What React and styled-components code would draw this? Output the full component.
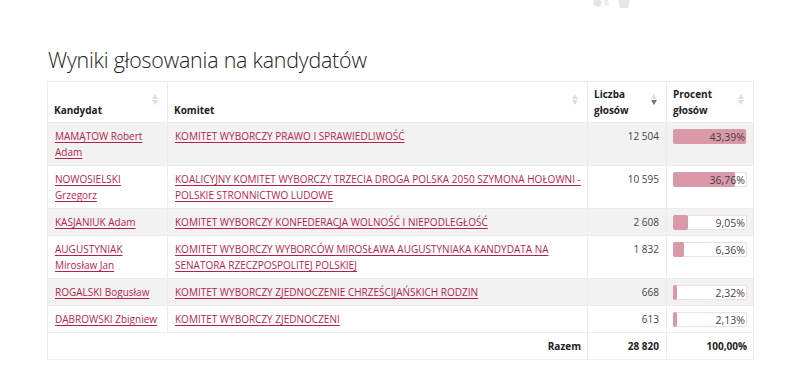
import React from 'react'
import styled, { createGlobalStyle } from 'styled-components'

const Global = createGlobalStyle`
  html, body {
    margin: 0;
    padding: 0;
    background: #fff;
  }
  body {
    font-family: "Open Sans", "Liberation Sans", sans-serif;
    color: #333;
  }
`

const Page = styled.div`
  width: 800px;
  height: 377px;
  overflow: hidden;
  position: relative;
`

const TopIcons = styled.div`
  position: absolute;
  left: 590px;
  top: -6px;
`

const Section = styled.div`
  padding: 45px 47px 0 47px;
`

const Title = styled.h2`
  margin: 0 0 6px 1px;
  font-size: 21.4px;
  font-weight: 300;
  color: #222;
  line-height: 30px;
  letter-spacing: -0.2px;
`

const Table = styled.table`
  width: 706px;
  table-layout: fixed;
  border-collapse: collapse;
  font-size: 10px;
  line-height: 16px;
  border: 1px solid #ececec;
`

const Th = styled.th`
  position: relative;
  text-align: left;
  vertical-align: bottom;
  font-weight: 700;
  color: #222;
  padding: 4px 20px 4px 6px;
  border-left: 1px solid #ececec;
`

const Sort = styled.span`
  position: absolute;
  right: 9px;
  top: 50%;
  margin-top: -8px;
  display: flex;
  flex-direction: column;
  gap: 1px;
`

const Arrow = styled.span`
  width: 0;
  height: 0;
  border-left: 3px solid transparent;
  border-right: 3px solid transparent;
  ${p => p.$up
    ? `border-bottom: 5px solid ${p.$on ? '#777' : '#dedede'};`
    : `border-top: 5px solid ${p.$on ? '#777' : '#dedede'};`}
`

const Row = styled.tr`
  background: ${p => (p.$odd ? '#f2f2f2' : '#fff')};
  border-top: 1px solid #ececec;
`

const Td = styled.td`
  vertical-align: top;
  padding: 5px 6px 5px 7px;
  border-left: 1px solid #ececec;
  text-align: ${p => (p.$right ? 'right' : 'left')};
  font-weight: ${p => (p.$bold ? 700 : 400)};
  color: ${p => (p.$bold ? '#222' : '#444')};
`

const NumTd = styled(Td)`
  padding-right: 7px;
`

const BarTd = styled(Td)`
  padding: 6px 6px 5px 6px;
`

const Link = styled.a`
  color: #b51f4b;
  text-decoration: underline;
  text-underline-offset: 2px;
  text-decoration-thickness: 1px;
`

const Track = styled.div`
  position: relative;
  height: 13px;
  border: 1px solid #f3dde3;
  border-radius: 2px;
  background: #fff;
  text-align: right;
  line-height: 14px;
  padding-right: 1px;
  font-size: 10.5px;
  color: #444;
`

const Fill = styled.div`
  position: absolute;
  left: -1px;
  top: -1px;
  bottom: -1px;
  background: #d999a9;
  border-radius: 2px;
`

const Label = styled.span`
  position: relative;
`

const data = [
  ['MAMĄTOW Robert Adam', 'KOMITET WYBORCZY PRAWO I SPRAWIEDLIWOŚĆ', '12 504', 43.39],
  ['NOWOSIELSKI Grzegorz', 'KOALICYJNY KOMITET WYBORCZY TRZECIA DROGA POLSKA 2050 SZYMONA HOŁOWNI - POLSKIE STRONNICTWO LUDOWE', '10 595', 36.76],
  ['KASJANIUK Adam', 'KOMITET WYBORCZY KONFEDERACJA WOLNOŚĆ I NIEPODLEGŁOŚĆ', '2 608', 9.05],
  ['AUGUSTYNIAK Mirosław Jan', 'KOMITET WYBORCZY WYBORCÓW MIROSŁAWA AUGUSTYNIAKA KANDYDATA NA SENATORA RZECZPOSPOLITEJ POLSKIEJ', '1 832', 6.36],
  ['ROGALSKI Bogusław', 'KOMITET WYBORCZY ZJEDNOCZENIE CHRZEŚCIJAŃSKICH RODZIN', '668', 2.32],
  ['DĄBROWSKI Zbigniew', 'KOMITET WYBORCZY ZJEDNOCZENI', '613', 2.13],
]

const SortIcon = ({ down }) => (
  <Sort>
    <Arrow $up />
    <Arrow $on={down} />
  </Sort>
)

const pct = v => v.toFixed(2).replace('.', ',') + '%'

export default function App() {
  return (
    <Page>
      <Global />
      <TopIcons>
        <svg width="48" height="14" viewBox="0 0 48 14">
          <path d="M4 2 L12 4 L10 10 L3 8 Z" fill="#e4e4e4" />
          <path d="M14 3 L18 2 L19 8 L15 9 Z" fill="#ececec" />
          <path d="M28 2 L40 2 L38 11 L30 11 Z" fill="#e6e6e6" />
        </svg>
      </TopIcons>
      <Section>
        <Title>Wyniki głosowania na kandydatów</Title>
        <Table>
          <colgroup>
            <col style={{ width: 120 }} />
            <col style={{ width: 420 }} />
            <col style={{ width: 79 }} />
            <col style={{ width: 87 }} />
          </colgroup>
          <thead>
            <tr>
              <Th>Kandydat<SortIcon /></Th>
              <Th>Komitet<SortIcon /></Th>
              <Th>Liczba<br />głosów<SortIcon down /></Th>
              <Th>Procent<br />głosów<SortIcon /></Th>
            </tr>
          </thead>
          <tbody>
            {data.map(([name, com, votes, p], i) => (
              <Row key={name} $odd={i % 2 === 0}>
                <Td><Link href="#">{name}</Link></Td>
                <Td><Link href="#">{com}</Link></Td>
                <NumTd $right>{votes}</NumTd>
                <BarTd>
                  <Track>
                    <Fill style={{ width: `${Math.max(p * 2.33, 3)}%` }} />
                    <Label>{pct(p)}</Label>
                  </Track>
                </BarTd>
              </Row>
            ))}
            <Row>
              <Td colSpan={2} $right $bold>Razem</Td>
              <NumTd $right $bold>28 820</NumTd>
              <Td $right $bold>100,00%</Td>
            </Row>
          </tbody>
        </Table>
      </Section>
    </Page>
  )
}
